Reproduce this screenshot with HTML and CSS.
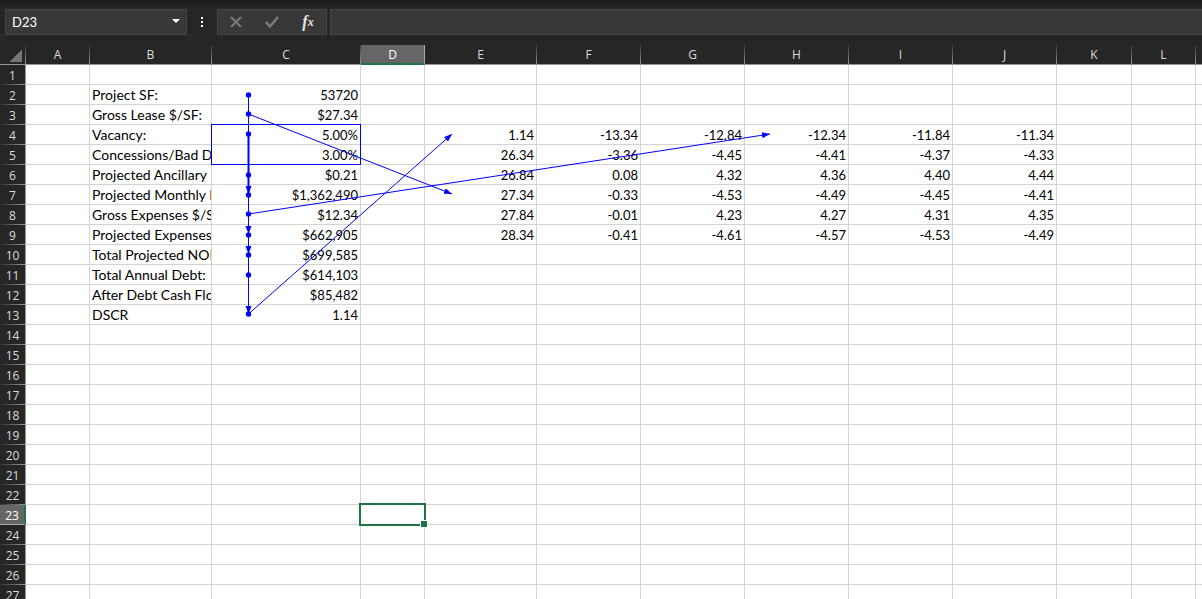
FILE: index.html
```
<!DOCTYPE html>
<html lang="en">
<head>
  <meta charset="UTF-8">
  <meta name="viewport" content="width=device-width, initial-scale=1.0">
  <title>Project Worksheet</title>
  <link rel="stylesheet" href="styles.css">
</head>
<body>
  <div class="formula-bar">
    <div class="name-box">
      <input type="text" id="cell-name" aria-label="Name box" value="D23">
      <button class="name-arrow" aria-label="Show names">
        <svg width="8" height="4" viewBox="0 0 8 4"><path d="M0 0h8L4 4z" fill="#fff"/></svg>
      </button>
    </div>
    <div class="grip"><i></i><i></i><i></i></div>
    <div class="bar-buttons">
      <button aria-label="Cancel">
        <svg width="12" height="12" viewBox="0 0 12 12"><path d="M1 1l10 10M11 1L1 11" fill="none" stroke="#7a7a7a" stroke-width="2"/></svg>
      </button>
      <button aria-label="Enter">
        <svg width="14" height="12" viewBox="0 0 14 12"><path d="M1 6l4 4.500L13 1" fill="none" stroke="#7a7a7a" stroke-width="2.600"/></svg>
      </button>
      <button class="fx" aria-label="Insert function">f<sub>x</sub></button>
    </div>
    <input type="text" class="formula" id="formula" aria-label="Formula">
  </div>

  <div class="sheet">
    <table id="grid"></table>

    <!-- trace precedents / dependents arrows -->
    <svg class="trace" width="1060" height="300" viewBox="0 0 1060 300">
      <defs>
        <marker id="head" markerUnits="userSpaceOnUse" markerWidth="9" markerHeight="6" refX="8" refY="3" orient="auto">
          <path d="M0 0l8 3l-8 3z"/>
        </marker>
      </defs>
      <rect x="211.500" y="79.500" width="149" height="40"/>
      <path d="M248.500 50V268"/>
      <path class="thick" d="M248.500 89V148"/>
      <path marker-end="url(#head)" d="M248.500 69L452 149"/>
      <path marker-end="url(#head)" d="M248.500 169L770 89"/>
      <path marker-end="url(#head)" d="M248.500 269L452 89"/>
      <g id="trace-marks"></g>
    </svg>
  </div>

  <script>
    const columns = 'ABCDEFGHIJKLM'.split('');
    const widths = { B: 122, C: 149, E: 112, F: 104, G: 104, H: 104, I: 104, J: 104, K: 75 };
    const rowCount = 40;
    const active = { col: 'D', row: 23 };

    const rows = {
      2: { B: 'Project SF:', C: '53720' },
      3: { B: 'Gross Lease $/SF:', C: '$27.34' },
      4: { B: 'Vacancy:', C: '5.00%', E: '1.14', F: '-13.34', G: '-12.84', H: '-12.34', I: '-11.84', J: '-11.34' },
      5: { B: 'Concessions/Bad Debt:', C: '3.00%', E: '26.34', F: '-3.36', G: '-4.45', H: '-4.41', I: '-4.37', J: '-4.33' },
      6: { B: 'Projected Ancillary Income:', C: '$0.21', E: '26.84', F: '0.08', G: '4.32', H: '4.36', I: '4.40', J: '4.44' },
      7: { B: 'Projected Monthly Income:', C: '$1,362,490', E: '27.34', F: '-0.33', G: '-4.53', H: '-4.49', I: '-4.45', J: '-4.41' },
      8: { B: 'Gross Expenses $/SF:', C: '$12.34', E: '27.84', F: '-0.01', G: '4.23', H: '4.27', I: '4.31', J: '4.35' },
      9: { B: 'Projected Expenses:', C: '$662,905', E: '28.34', F: '-0.41', G: '-4.61', H: '-4.57', I: '-4.53', J: '-4.49' },
      10: { B: 'Total Projected NOI:', C: '$699,585' },
      11: { B: 'Total Annual Debt:', C: '$614,103' },
      12: { B: 'After Debt Cash Flow:', C: '$85,482' },
      13: { B: 'DSCR', C: '1.14' }
    };

    let html = '<colgroup><col style="width:26px">';
    html += columns.map(c => `<col style="width:${widths[c] || 64}px">`).join('');
    html += '</colgroup><thead><tr><th class="corner"></th>';
    html += columns.map(c => `<th scope="col"${c === active.col ? ' class="current"' : ''}>${c}</th>`).join('');
    html += '</tr></thead><tbody>';

    for (let r = 1; r <= rowCount; r++) {
      const data = rows[r] || {};
      html += `<tr><th scope="row"${r === active.row ? ' class="current"' : ''}>${r}</th>`;
      html += columns.map(c => {
        const names = [];
        if (c === 'B') names.push('label');
        if (c === active.col && r === active.row) names.push('active');
        const cls = names.length ? ` class="${names.join(' ')}"` : '';
        return `<td${cls}>${data[c] || ''}</td>`;
      }).join('');
      html += '</tr>';
    }
    document.getElementById('grid').innerHTML = html + '</tbody>';

    // dots sit on source cells, heads point down at the next one
    const dots = [50, 69, 89, 130, 150, 169, 190, 210, 230, 269];
    const heads = [149, 189, 209, 269];
    document.getElementById('trace-marks').innerHTML =
      dots.map(y => `<circle cx="248.500" cy="${y}" r="2.700"/>`).join('') +
      heads.map(y => `<path class="solid" d="M245.500 ${y - 8}h6l-3 8z"/>`).join('');
  </script>
</body>
</html>
```

FILE: styles.css
```
* {
  box-sizing: border-box;
}
body {
  margin: 0;
  height: 100vh;
  overflow: hidden;
  display: flex;
  flex-direction: column;
  background: #262626;
  font-family: Lato, 'Liberation Sans', sans-serif;
  font-size: 13px;
}
button {
  padding: 0;
  border: none;
  background: none;
  color: #fff;
  display: flex;
  align-items: center;
  justify-content: center;
}
input {
  min-width: 0;
  border: none;
  outline: none;
  background: none;
  color: #fff;
  font: inherit;
}

/* formula bar */
.formula-bar {
  display: flex;
  flex-shrink: 0;
  height: 45px;
  padding: 9px 0 10px 5px;
  background: linear-gradient(#1a1a1a, #262626 8px);
}
.name-box, .bar-buttons, .formula {
  background: #383838;
  border: 1px solid #464646;
}
.name-box {
  display: flex;
  width: 182px;
}
.name-box input {
  flex: 1;
  padding: 0 6px;
}
.name-arrow {
  width: 20px;
  padding-bottom: 3px;
}
.grip {
  width: 30px;
  display: flex;
  flex-direction: column;
  align-items: center;
  justify-content: center;
  gap: 2px;
}
.grip i {
  width: 2px;
  height: 2px;
  background: #fff;
}
.bar-buttons {
  display: flex;
  width: 110px;
  margin-right: 3px;
}
.bar-buttons button {
  flex: 1;
}
.bar-buttons .fx {
  font: italic bold 16px 'Liberation Serif', serif;
  color: #e6e6e6;
}
.fx sub {
  font-size: 12px;
  line-height: 12px;
}
.formula {
  flex: 1;
  border-right: none;
  padding: 0 6px;
}

/* grid */
.sheet {
  position: relative;
  flex: 1;
  min-height: 0;
  overflow: auto;
  scrollbar-width: none;
}
table {
  table-layout: fixed;
  width: 0;
  border-spacing: 0;
  background: #fff;
}
th, td {
  height: 20px;
  line-height: 18px;
  white-space: nowrap;
}
td {
  padding: 1px 2px 0 0;
  border-right: 1px solid #d4d4d4;
  border-bottom: 1px solid #d4d4d4;
  overflow: hidden;
  text-align: right;
  color: #000;
}
td.label {
  padding: 1px 0 0 2px;
  text-align: left;
  font-size: 14px;
}
th {
  padding: 0;
  font-family: 'Open Sans', sans-serif;
  font-size: 12px;
  font-weight: normal;
  color: #dcdcdc;
  background: #262626;
}
thead th {
  border-bottom: 1px solid #999;
  border-right: 1px solid;
  border-image: linear-gradient(#333, #999) 1;
}
tbody th {
  padding-top: 2px;
  line-height: 17px;
  border-right: 1px solid;
  border-bottom: 1px solid;
  border-image: linear-gradient(to right, #2c2c2c, #999) 1;
}
th.current {
  background: #666;
  color: #fff;
}
thead th.current {
  border-image: none;
  border-right-color: #aaa;
  border-bottom: 2px solid #217346;
  line-height: 17px;
}
tbody th.current {
  border-image: none;
  border-bottom-color: #aaa;
  border-right: 2px solid #217346;
}
.corner {
  background: linear-gradient(135deg, transparent 50%, #777 50%) 10px 5px / 12px 12px no-repeat #262626;
}
td.active {
  position: relative;
  overflow: visible;
}
td.active::before {
  content: '';
  position: absolute;
  inset: -2px;
  border: 2px solid #217346;
}
td.active::after {
  content: '';
  position: absolute;
  right: -3px;
  bottom: -3px;
  width: 6px;
  height: 6px;
  background: #217346;
  border-top: 1px solid #fff;
  border-left: 1px solid #fff;
}

/* trace arrows */
.trace {
  position: absolute;
  top: 0;
  left: 0;
  pointer-events: none;
  fill: none;
  stroke: #00f;
}
.trace .thick {
  stroke-width: 2;
}
.trace circle, .trace .solid, .trace marker path {
  fill: #00f;
  stroke: none;
}
```
